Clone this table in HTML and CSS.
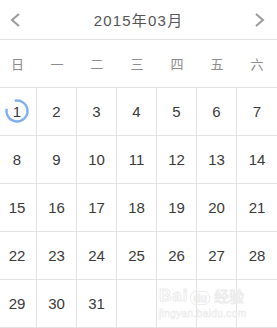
FILE: index.html
```html
<!DOCTYPE html>
<html lang="zh">
<head>
<meta charset="utf-8">
<link rel="stylesheet" href="styles.css">
</head>
<body>
<div class="cal">
  <div class="header">
    <svg class="chev" width="10" height="14" viewBox="0 0 10 14"><polyline points="9,1 2,7 9,13" /></svg>
    <div class="title">2015年03月</div>
    <svg class="chev" width="10" height="14" viewBox="0 0 10 14"><polyline points="1,1 8,7 1,13" /></svg>
  </div>
  <div class="weekdays">
    <div class="wd first">日</div><div class="wd">一</div><div class="wd">二</div><div class="wd">三</div><div class="wd">四</div><div class="wd">五</div><div class="wd">六</div>
  </div>
  <div class="dates">
    <div class="d first today"><span class="num">1</span><svg class="ring" width="26" height="26" viewBox="0 0 26 26"><path d="M10.82 2.73 A10.5 10.5 0 1 1 2.73 10.82"/></svg></div><div class="d">2</div><div class="d">3</div><div class="d">4</div><div class="d">5</div><div class="d">6</div><div class="d last">7</div>
    <div class="d first">8</div><div class="d">9</div><div class="d">10</div><div class="d">11</div><div class="d">12</div><div class="d">13</div><div class="d last">14</div>
    <div class="d first">15</div><div class="d">16</div><div class="d">17</div><div class="d">18</div><div class="d">19</div><div class="d">20</div><div class="d last">21</div>
    <div class="d first">22</div><div class="d">23</div><div class="d">24</div><div class="d">25</div><div class="d">26</div><div class="d">27</div><div class="d last">28</div>
    <div class="d first">29</div><div class="d">30</div><div class="d">31</div><div class="d"></div><div class="d"></div><div class="d"></div><div class="d last"></div>
  </div>
  <div class="watermark">
    <div class="wm-top"><span class="wm-bai">Bai</span><span class="wm-du">du</span><span class="wm-jy">经验</span></div>
    <div class="wm-url">jingyan.baidu.com</div>
  </div>
</div>
</body>
</html>
```
FILE: styles.css
```css
html, body {
  margin: 0;
  padding: 0;
  background: #fff;
}
.cal {
  position: relative;
  width: 277px;
  height: 328px;
  overflow: hidden;
  font-family: "Liberation Sans", "Noto Sans CJK SC", sans-serif;
}
.header {
  height: 39px;
  border-bottom: 1px solid #e3e3e3;
  display: flex;
  align-items: center;
  justify-content: space-between;
  padding: 0 12px 0 10px;
}
.chev polyline {
  fill: none;
  stroke: #9a9a9a;
  stroke-width: 2;
}
.title {
  color: #555;
  font-size: 15px;
  letter-spacing: 1.2px;
  padding-left: 2px;
}
.weekdays, .dates {
  display: grid;
  grid-template-columns: 37px repeat(6, 40px);
}
.weekdays {
  height: 47px;
  border-bottom: 1px solid #e3e3e3;
  align-items: center;
}
.wd {
  text-align: center;
  color: #8c8c8c;
  font-family: "Noto Sans CJK SC", sans-serif;
  font-size: 13px;
}
.wd.first, .d.first {
  padding-right: 2px;
}
.d {
  box-sizing: border-box;
  height: 48px;
  border-right: 1px solid #e3e3e3;
  border-bottom: 1px solid #e3e3e3;
  display: flex;
  align-items: center;
  justify-content: center;
  color: #3a3a3a;
  font-size: 15px;
  position: relative;
}
.d.last {
  border-right: none;
}
.ring {
  position: absolute;
  left: 4px;
  top: 10px;
  overflow: visible;
}
.ring path {
  fill: none;
  stroke: #80b0f4;
  stroke-width: 2.4;
}
.watermark {
  position: absolute;
  left: 159px;
  top: 285px;
  width: 90px;
  pointer-events: none;
}
.wm-top {
  display: flex;
  align-items: flex-end;
  gap: 2px;
  color: #fff;
  -webkit-text-stroke: 1px #ececec;
}
.wm-bai {
  font-size: 17px;
  font-weight: bold;
  letter-spacing: 1px;
}
.wm-du {
  font-size: 11px;
  font-weight: bold;
  border: 1px solid #ececec;
  border-radius: 6px;
  padding: 0 2px;
  margin-bottom: 1px;
}
.wm-jy {
  font-family: "Noto Sans CJK SC", sans-serif;
  font-size: 15px;
  margin-left: 2px;
}
.wm-url {
  font-size: 10px;
  color: #fff;
  -webkit-text-stroke: 0.6px #ebebeb;
  margin-top: 2px;
  letter-spacing: 0.4px;
}
```
